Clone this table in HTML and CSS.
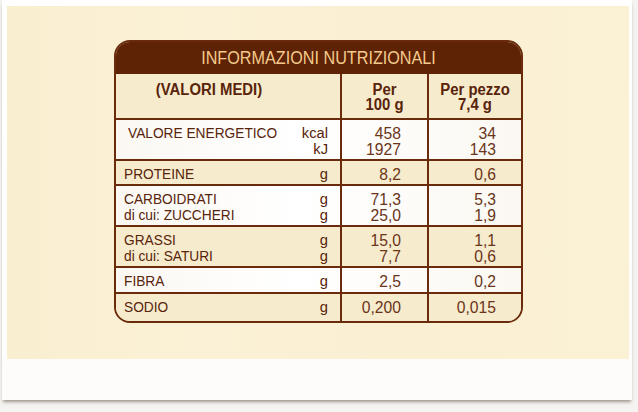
FILE: index.html
```html
<!DOCTYPE html>
<html lang="it">
<head>
<meta charset="utf-8">
<title>Informazioni nutrizionali</title>
<link rel="stylesheet" href="styles.css">
</head>
<body>
<div class="card">
  <div class="panel">
    <div class="nt">
      <div class="nt-title"><span class="tx">INFORMAZIONI NUTRIZIONALI</span></div>
      <div class="row head cream">
        <div class="c-name b"><span class="tx">(VALORI MEDI)</span></div>
        <div class="c-unit"></div>
        <div class="c-v1 b"><span class="tx">Per<br>100 g</span></div>
        <div class="c-v2 b"><span class="tx">Per pezzo<br>7,4 g</span></div>
      </div>
      <div class="row white two">
        <div class="c-name indent"><span class="tx">VALORE ENERGETICO</span></div>
        <div class="c-unit"><span class="tx">kcal<br>kJ</span></div>
        <div class="c-v1 num"><span class="tx">458<br>1927</span></div>
        <div class="c-v2 num"><span class="tx">34<br>143</span></div>
      </div>
      <div class="row cream one">
        <div class="c-name"><span class="tx">PROTEINE</span></div>
        <div class="c-unit"><span class="tx">g</span></div>
        <div class="c-v1 num"><span class="tx">8,2</span></div>
        <div class="c-v2 num"><span class="tx">0,6</span></div>
      </div>
      <div class="row white two">
        <div class="c-name"><span class="tx">CARBOIDRATI<br>di cui: ZUCCHERI</span></div>
        <div class="c-unit"><span class="tx">g<br>g</span></div>
        <div class="c-v1 num"><span class="tx">71,3<br>25,0</span></div>
        <div class="c-v2 num"><span class="tx">5,3<br>1,9</span></div>
      </div>
      <div class="row cream two">
        <div class="c-name"><span class="tx">GRASSI<br>di cui: SATURI</span></div>
        <div class="c-unit"><span class="tx">g<br>g</span></div>
        <div class="c-v1 num"><span class="tx">15,0<br>7,7</span></div>
        <div class="c-v2 num"><span class="tx">1,1<br>0,6</span></div>
      </div>
      <div class="row white one fibra">
        <div class="c-name"><span class="tx">FIBRA</span></div>
        <div class="c-unit"><span class="tx">g</span></div>
        <div class="c-v1 num"><span class="tx">2,5</span></div>
        <div class="c-v2 num"><span class="tx">0,2</span></div>
      </div>
      <div class="row cream last">
        <div class="c-name"><span class="tx">SODIO</span></div>
        <div class="c-unit"><span class="tx">g</span></div>
        <div class="c-v1 num"><span class="tx">0,200</span></div>
        <div class="c-v2 num"><span class="tx">0,015</span></div>
      </div>
    </div>
  </div>
</div>
</body>
</html>
```

FILE: styles.css
```css
* { box-sizing: border-box; }
html, body { margin: 0; padding: 0; }
body {
  width: 638px;
  height: 412px;
  background: #f4f3f2;
  padding: 0 6px 0 2px;
  font-family: "Liberation Sans", Arial, sans-serif;
  overflow: hidden;
}
.card {
  width: 630px;
  height: 400px;
  background: linear-gradient(180deg, #ffffff 0%, #fdfcfb 100%);
  box-shadow: 0 3px 3px -1px rgba(60, 40, 20, 0.45);
  padding: 6px 3px 0 5px;
}
.panel {
  height: 353px;
  background: linear-gradient(90deg, #f9eed0 0%, #fbf1d6 30%, #faefd3 60%, #fbf1d5 100%);
  padding: 34px 0 0 107px;
}
.nt {
  width: 409px;
  border: 2px solid #6a2b0c;
  border-radius: 16px;
  overflow: hidden;
  color: #58240b;
  background: #f7ebcd;
}
.tx { display: block; white-space: nowrap; }
.nt-title {
  height: 32px;
  background: #5e2205;
  color: #f3ca8c;
  font-size: 17.5px;
  line-height: 32px;
  text-align: center;
}
.nt-title .tx { transform: scaleX(0.925); transform-origin: center; }
.row {
  display: grid;
  grid-template-columns: 174px 50px 87px 94px;
  border-bottom: 2px solid #6a2b0c;
  font-size: 15.5px;
  line-height: 16px;
}
.row.last { border-bottom: 0; }
.cream { background: #f7ebcd; }
.white { background: linear-gradient(90deg, #fbf8f3 0%, #ffffff 45%, #fbf8f2 100%); }
.head { height: 46px; }
.two { height: 41px; }
.one { height: 25px; }
.fibra { height: 26px; }
.last { height: 27px; }
.row > div { padding-top: 5px; }
.c-name { padding-left: 8px; }
.c-name.indent { padding-left: 12px; }
.c-name .tx { transform: scaleX(0.885); transform-origin: left center; }
.c-unit { text-align: right; padding-right: 12px; }
.c-unit .tx { transform: scaleX(0.95); transform-origin: right center; }
.c-v1, .c-v2 { border-left: 2px solid #6a2b0c; }
.num {
  font-size: 16.5px;
  text-align: right;
  color: #6a3519;
}
.num .tx { transform: scaleX(0.95); transform-origin: right center; }
.c-v1.num { padding-right: 26px; }
.c-v2.num { padding-right: 25px; }
.head > div { padding-top: 8px; line-height: 15.2px; }
.b { font-weight: bold; font-size: 16px; text-align: center; }
.b .tx { transform: scaleX(0.93); transform-origin: center; }
.head .c-name { padding-left: 0; padding-right: 0; }
.head .c-name .tx { width: 186px; }
```
